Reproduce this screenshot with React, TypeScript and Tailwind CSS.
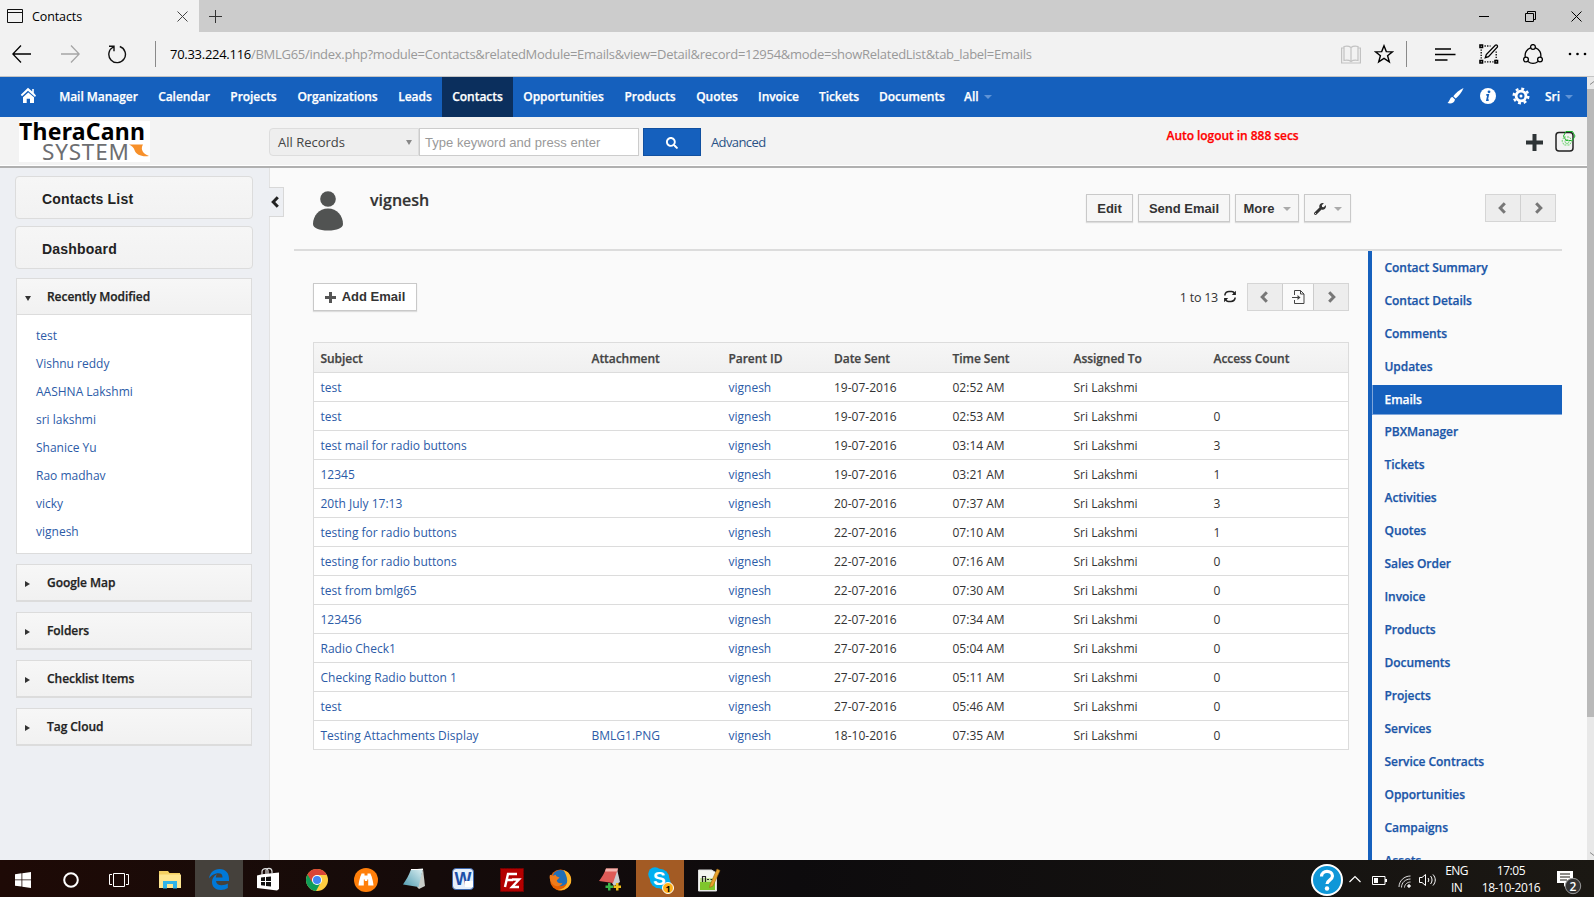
import React from "react";
import { FaWrench, FaSearch } from "react-icons/fa";

const STRONG = "font-semibold tracking-[-0.05px] [-webkit-text-stroke:0.25px_currentColor]";

const navItems: [string, string][] = [
  ["Mail Manager", "w-[99px]"],
  ["Calendar", "w-[72px]"],
  ["Projects", "w-[67px]"],
  ["Organizations", "w-[101px]"],
  ["Leads", "w-[54px]"],
  ["Contacts", "w-[71px]"],
  ["Opportunities", "w-[101px]"],
  ["Products", "w-[72px]"],
  ["Quotes", "w-[62px]"],
  ["Invoice", "w-[61px]"],
  ["Tickets", "w-[60px]"],
  ["Documents", "w-[86px]"],
];

const recent = ["test", "Vishnu reddy", "AASHNA Lakshmi", "sri lakshmi", "Shanice Yu", "Rao madhav", "vicky", "vignesh"];
const widgets = ["Google Map", "Folders", "Checklist Items", "Tag Cloud"];

const rows: [string, string, string, string, string][] = [
  ["test", "", "19-07-2016", "02:52 AM", ""],
  ["test", "", "19-07-2016", "02:53 AM", "0"],
  ["test mail for radio buttons", "", "19-07-2016", "03:14 AM", "3"],
  ["12345", "", "19-07-2016", "03:21 AM", "1"],
  ["20th July 17:13", "", "20-07-2016", "07:37 AM", "3"],
  ["testing for radio buttons", "", "22-07-2016", "07:10 AM", "1"],
  ["testing for radio buttons", "", "22-07-2016", "07:16 AM", "0"],
  ["test from bmlg65", "", "22-07-2016", "07:30 AM", "0"],
  ["123456", "", "22-07-2016", "07:34 AM", "0"],
  ["Radio Check1", "", "27-07-2016", "05:04 AM", "0"],
  ["Checking Radio button 1", "", "27-07-2016", "05:11 AM", "0"],
  ["test", "", "27-07-2016", "05:46 AM", "0"],
  ["Testing Attachments Display", "BMLG1.PNG", "18-10-2016", "07:35 AM", "0"],
];

const related = [
  "Contact Summary", "Contact Details", "Comments", "Updates", "Emails", "PBXManager", "Tickets", "Activities", "Quotes",
  "Sales Order", "Invoice", "Products", "Documents", "Projects", "Services", "Service Contracts", "Opportunities", "Campaigns", "Assets",
];

const GRID = "grid grid-cols-[271px_137px_105.5px_118.5px_121px_140px_1fr] pl-[6.5px] items-center";

function Caret({ className = "" }: { className?: string }) {
  return <span className={`inline-block border-x-4 border-t-4 border-x-transparent ${className}`} />;
}

function Chevron({ right = false }: { right?: boolean }) {
  return (
    <svg width="8" height="12" viewBox="0 0 8 12" fill="none" stroke="currentColor" strokeWidth="3">
      <path d={right ? "M1.200 1.200L5.800 6 1.200 10.800" : "M6.800 1.200L2.200 6l4.600 4.800"} />
    </svg>
  );
}

function TabStrip() {
  return (
    <div className="flex h-8 shrink-0 bg-[#cccccc]">
      <div className="flex w-[199px] items-center bg-[#f2f2f2] pl-[7px] pr-[11px]">
        <svg width="16" height="14" viewBox="0 0 16 14" fill="none" stroke="#111">
          <path d="M.5 .5h15v13H.5zM.5 3.5h15" />
        </svg>
        <span className="ml-[9px] pt-0.5 text-[12.5px] text-black tracking-[-0.1px]">Contacts</span>
        <svg className="ml-auto" width="11" height="11" viewBox="0 0 11 11" stroke="#444">
          <path d="M.5 .5l10 10M10.500 .5l-10 10" />
        </svg>
      </div>
      <svg className="ml-[10px] mt-[10px]" width="13" height="13" viewBox="0 0 13 13" stroke="#333">
        <path d="M6.500 0v13M0 6.500h13" />
      </svg>
      <div className="ml-auto flex items-center pr-[12px]">
        <svg width="10" height="10" viewBox="0 0 10 10" stroke="#000"><path d="M0 5.500h10" /></svg>
        <svg className="ml-9" width="11" height="11" viewBox="0 0 11 11" fill="none" stroke="#000">
          <path d="M.5 2.500h8v8h-8zM2.500 2.500v-2h8v8h-2" />
        </svg>
        <svg className="ml-[35px]" width="11" height="11" viewBox="0 0 11 11" stroke="#000"><path d="M.5 .5l10 10M10.500 .5l-10 10" /></svg>
      </div>
    </div>
  );
}

function AddressBar() {
  return (
    <div className="flex h-[45px] shrink-0 items-center border-b border-[#c4c4c4] bg-[#f2f2f2] pl-3">
      <svg width="20" height="18" viewBox="0 0 20 18" fill="none" stroke="#000" strokeWidth="1.3"><path d="M9 .5L.8 9l8.200 8.500M.8 9H19" /></svg>
      <svg className="ml-7" width="20" height="18" viewBox="0 0 20 18" fill="none" stroke="#a5a5a5" strokeWidth="1.300"><path d="M11 .5L19.200 9 11 17.500M19.200 9H1" /></svg>
      <svg className="ml-[27px]" width="20" height="19" viewBox="0 0 20 19" fill="none" stroke="#111" strokeWidth="1.400">
        <path d="M12.800 1.500a8.300 8.300 0 1 1-6.500.5M2 1.300h5v5" />
      </svg>
      <div className="ml-7 h-[26px] w-px bg-[#8a8a8a]" />
      <div className="ml-[14px] pt-[2px] text-[13px] tracking-[-0.28px] text-[#999] whitespace-nowrap"><span className="text-black">70.33.224.116</span>/BMLG65/index.php?module=Contacts&amp;relatedModule=Emails&amp;view=Detail&amp;record=12954&amp;mode=showRelatedList&amp;tab_label=Emails</div>
      <div className="ml-auto flex items-center pr-[7px]">
        <svg width="20" height="19" viewBox="0 0 20 19" fill="none" stroke="#c2c2c2" strokeWidth="1.200">
          <path d="M10 2.500C8 1 5 1 3 1.500v14c2-.4 5-.4 7 1 2-1.400 5-1.400 7-1v-14c-2-.5-5-.5-7 1zM10 2.500v14M3 3H.6v15h18.800V3H17" />
        </svg>
        <svg className="ml-[13px]" width="20" height="20" viewBox="0 0 20 20" fill="none" stroke="#000" strokeWidth="1.400">
          <path d="M10 1.800l2.300 5.800 6.200.3-4.900 3.900 1.700 6L10 14.400l-5.300 3.400 1.700-6L1.500 7.900l6.200-.3z" />
        </svg>
        <div className="ml-[12px] h-[26px] w-px bg-[#8a8a8a]" />
        <svg className="ml-7" width="21" height="13" viewBox="0 0 21 13" stroke="#000" strokeWidth="1.300"><path d="M0 1h16M0 6.500h20.500M0 12h12.500" /></svg>
        <svg className="ml-[23px]" width="20" height="20" viewBox="0 0 20 20" fill="none" stroke="#000" strokeWidth="1.300">
          <path d="M1 1h2.500v2.500H1zM1 16.500h2.500V19H1zM16 16.500h2.500V19H16z" strokeWidth="1.600" />
          <path d="M6.300 13.700l1-3.200L16.300 1.200c1.200-.8 2.700.5 2 2L9.500 12.600z" />
          <path d="M5.500 2h6M2.200 5.500v10M17.200 7.500v8M5.500 17.800h9" strokeDasharray="1.300 1.300" />
        </svg>
        <svg className="ml-6" width="20" height="20" viewBox="0 0 20 20" fill="none" stroke="#000" strokeWidth="1.300">
          <circle cx="10" cy="3" r="2.400" /><circle cx="3" cy="15.500" r="2.400" /><circle cx="17" cy="15.500" r="2.400" />
          <path d="M7.500 3.800A8 8 0 0 0 2.300 13M12.500 3.800a8 8 0 0 1 5.200 9.200M5 17.500a8 8 0 0 0 10 0" />
        </svg>
        <svg className="ml-[25px]" width="19" height="4" viewBox="0 0 19 4"><circle cx="2" cy="2" r="1.300" /><circle cx="9.500" cy="2" r="1.300" /><circle cx="17" cy="2" r="1.300" /></svg>
      </div>
    </div>
  );
}

function NavBar() {
  return (
    <nav className={`flex h-10 shrink-0 items-center bg-[#1560bd] text-[12px] text-white ${STRONG}`}>
      <div className="-mt-[4px] flex w-[49px] pl-5">
        <svg width="17" height="17" viewBox="0 0 17 17" fill="#fff">
          <path d="M8 .8L.8 7.800l1.200 1.500L8 3.800l3.300 3 1.500 1.300L15 10l1-1.500L13.800 6V2h-1.600v2.600z" />
          <path d="M8.300 5.600L3 10.300V16h3.700v-4.300h3.300V16h4v-5.700z" />
        </svg>
      </div>
      {navItems.map(([label, w]) => (
        <div key={label} className={`${w} flex h-10 items-center justify-center whitespace-nowrap ${label === "Contacts" ? "bg-[#0b2f5d]" : ""}`}>{label}</div>
      ))}
      <div className="ml-[9px] flex items-center">All<Caret className="ml-[6px] border-t-[#5f93d6]" /></div>
      <div className="ml-auto flex items-center pr-[14px]">
        <svg className="-mt-0.5" width="17" height="16" viewBox="0 0 17 16" fill="#fff">
          <path d="M16.500 0C12 2 8.500 5 6.300 8.300l2.400 2.200C12 7.500 15 4 16.500 0z" /><path d="M5.500 9c-2.500 0-2 3-5 6 3 1 7 .3 7.500-3.500z" />
        </svg>
        <svg className="ml-4 -mt-0.5" width="16" height="16" viewBox="0 0 16 16">
          <circle cx="8" cy="8" r="8" fill="#fff" /><circle cx="9" cy="3.800" r="1.400" fill="#1560bd" />
          <path d="M6.300 6.800h1.900l-1.200 5.400h1.700" fill="none" stroke="#1560bd" strokeWidth="1.700" />
        </svg>
        <svg className="ml-[16px] -mt-0.5" width="18" height="18" viewBox="0 0 18 18" fill="none" stroke="#fff">
          <circle cx="9" cy="9" r="4.900" strokeWidth="2.800" /><circle cx="9" cy="9" r="1.500" fill="#fff" stroke="none" />
          <circle cx="9" cy="9" r="7.300" strokeWidth="2.400" strokeDasharray="2.870 2.870" />
        </svg>
        <span className="ml-[15px]">Sri</span>
        <Caret className="ml-[5px] border-t-[#5f93d6]" />
      </div>
    </nav>
  );
}

function SearchHeader() {
  return (
    <header className="flex h-[51px] shrink-0 border-b-2 border-b-[#b0b0b0] bg-[#f3f3f3] text-[13px] shadow-[inset_0_-1px_0_#fff]">
      <div className="ml-[19px] mt-1 flex h-[41px] w-[131px] flex-col bg-white">
        <div className="h-[21px] whitespace-nowrap font-['Noto_Sans'] text-[23px] font-bold leading-[20px] tracking-[0.25px] text-black">TheraCann</div>
        <div className="flex">
          <span className="ml-[23px] w-[87px] whitespace-nowrap font-['Noto_Sans'] text-[22.500px] leading-[22px] tracking-[0.8px] text-[#6d6e71]">SYSTEM</span>
          <svg className="mt-[3px]" width="20" height="13" viewBox="0 0 20 13" fill="#f7902a"><path d="M0 .5h14c-3 4.500 0 9.500 6 11.500-7 1-13-1-14.500-6C4.800 3.500 2.500 1.500 0 .5z" /></svg>
        </div>
      </div>
      <div className="ml-[119px] mt-[11px] flex h-7 w-[150px] items-center rounded-l-sm border border-[#ddd] bg-[#eeeeee] pl-2 pr-[6px] pt-px text-[#444]">
        All Records<Caret className="ml-auto border-x-[3.500px] border-t-[5px] border-t-[#888]" />
      </div>
      <div className="mt-[11px] flex h-7 w-[220px] items-center border border-[#ccc] bg-white pl-[5px] pt-0.5 font-['Liberation_Sans'] tracking-[0.04px] text-[#999]">Type keyword and press enter</div>
      <div className="ml-1 mt-[11px] flex h-7 w-[58px] items-center justify-center border border-[#1150a0] bg-[#1560bd] pt-0.5 text-white"><FaSearch size={12} /></div>
      <div className="ml-[10px] mt-[12px] flex h-7 items-center tracking-[-0.6px] text-[#2a5285]">Advanced</div>
      <div className={`ml-[401px] mt-[9px] text-[12px] leading-[20px] text-[#f00] whitespace-nowrap ${STRONG}`}>Auto logout in 888 secs</div>
      <div className="ml-auto flex pr-[11px]">
        <svg className="mt-[17px]" width="17" height="17" viewBox="0 0 17 17" fill="#2e3436"><path d="M6.500 0h4v6.500H17v4h-6.500V17h-4v-6.500H0v-4h6.500z" /></svg>
        <svg className="ml-3 mt-[13px]" width="21" height="23" viewBox="0 0 21 23" fill="none">
          <rect x="1" y="2.500" width="17" height="18.500" rx="3" fill="#f2f2f2" stroke="#222" strokeWidth="1.500" />
          <path d="M11 1.500h6.500l2.500 4.500-2.500 4.500H11L8.500 6z" stroke="#18b028" /><path d="M9 7h5.500l2.500 4-2.500 4H9l-2-4z" stroke="#6fd36f" strokeDasharray="2 1" /><circle cx="12" cy="11.500" r="2" stroke="#7fd67f" />
        </svg>
      </div>
    </header>
  );
}

function Sidebar() {
  return (
    <aside className="flex w-[270px] shrink-0 flex-col border-r border-[#e2e2e2] bg-[#edeff3] pl-[15px] pr-4 pt-2">
      {["Contacts List", "Dashboard"].map((t) => (
        <div key={t} className="mb-[7px] flex h-[43px] items-center rounded-sm border border-[#dcdcdc] bg-gradient-to-b from-[#f6f6f6] to-[#f2f2f2] pl-[26px] pt-[3px] font-['Liberation_Sans'] text-[14px] font-bold tracking-[0.2px] text-[#222]">{t}</div>
      ))}
      <div className="mx-px mt-[2px] h-[276px] border border-[#dcdcdc] bg-white">
        <div className="flex h-[36px] items-center border-b border-[#dcdcdc] bg-gradient-to-b from-[#f7f7f7] to-[#f1f1f1]">
          <Caret className="ml-2 mt-1 border-x-[3px] border-t-[5px] border-t-[#333]" />
          <span className={`ml-4 text-[12px] text-[#222] ${STRONG}`}>Recently Modified</span>
        </div>
        <div className="pl-[19px] pt-[7px] text-[12px] text-[#2c5ba7]">
          {recent.map((r) => <div key={r} className="h-7 leading-7">{r}</div>)}
        </div>
      </div>
      {widgets.map((w) => (
        <div key={w} className="mx-px mt-[10px] flex h-[38px] shrink-0 items-center border border-b-2 border-[#dcdcdc] bg-gradient-to-b from-[#f7f7f7] to-[#f1f1f1]">
          <span className="ml-2 mt-[3px] border-y-[3px] border-l-[5px] border-y-transparent border-l-[#333]" />
          <span className={`ml-[17px] text-[12px] text-[#222] ${STRONG}`}>{w}</span>
        </div>
      ))}
    </aside>
  );
}

const BTN = "flex h-7 items-center justify-center border border-[#c9c9c9] pt-px font-['Liberation_Sans'] text-[13px] font-bold text-[#333] shadow-[0_1px_1px_#ddd] whitespace-nowrap";

function RecordHeader() {
  return (
    <div className="flex h-[83px] shrink-0">
      <div className="-ml-px mt-[19px] flex h-[30px] w-[15px] items-center border border-l-0 border-[#d8d8d8] bg-[#edeff3] pl-[2px] text-[#222]"><Chevron /></div>
      <div className="ml-[10px] mr-[25px] flex flex-1 border-b-2 border-[#dcdcdc]">
        <svg className="ml-[19px] mt-[23px]" width="30" height="40" viewBox="0 0 30 40" fill="#515352">
          <circle cx="15" cy="8" r="7.800" /><path d="M15 17.500C6 17.500 0 25 0 33c0 4 6 6.500 15 6.500s15-2.500 15-6.500c0-8-6-15.500-15-15.500z" />
        </svg>
        <span className="ml-[27px] mt-5 text-[16px] font-semibold leading-6 text-[#333] [-webkit-text-stroke:0.2px_currentColor]">vignesh</span>
        <div className="ml-auto mt-[26px] flex">
          <div className={`${BTN} w-[47px] bg-[#f6f6f6]`}>Edit</div>
          <div className={`${BTN} ml-[5px] w-[92px] bg-[#f6f6f6]`}>Send Email</div>
          <div className={`${BTN} ml-[5px] w-[64px] bg-[#f6f6f6]`}>More<Caret className="ml-2 border-t-[#aaa]" /></div>
          <div className={`${BTN} ml-[5px] w-[47px] bg-[#f6f6f6]`}><FaWrench size={12} /><Caret className="ml-2 border-t-[#aaa]" /></div>
          <div className="ml-[134px] mr-[6px] flex h-7 w-[71px] border border-[#d5d5d5] bg-[#ededed] text-[#777]">
            <div className="flex flex-1 items-center justify-center border-r border-[#d0d0d0] pr-px"><Chevron /></div>
            <div className="flex flex-1 items-center justify-center pl-[2px]"><Chevron right /></div>
          </div>
        </div>
      </div>
    </div>
  );
}

function RelatedList() {
  return (
    <div className="w-[1036px]">
      <div className="flex h-7 mt-8 items-center">
        <div className={`${BTN} w-[104px] bg-white`}>
          <svg className="mr-[6px] -mt-px" width="11" height="11" viewBox="0 0 11 11" fill="#555"><path d="M4 0h3v4h4v3H7v4H4V7H0V4h4z" /></svg>
          <span className="-mt-px">Add Email</span>
        </div>
        <span className="ml-auto pt-0.5 text-[12.500px] tracking-[-0.25px] text-[#333]">1 to 13</span>
        <svg className="-mt-0.5 ml-[6px] mr-[11px]" width="12" height="13" viewBox="0 0 12 13" fill="none" stroke="#222" strokeWidth="1.500">
          <path d="M.9 5.500V5A4.200 4.200 0 0 1 5 1.600h2.500a3 3 0 0 1 3 2.500M11.100 7.500V8A4.200 4.200 0 0 1 7 11.400H4.500a3 3 0 0 1-3-2.500" /><path d="M11.900 .8v4.200H7.800zM.1 12.200V8H4.200z" fill="#222" stroke="none" />
        </svg>
        <div className="flex h-7 w-[102px] border border-[#d5d5d5] bg-[#ededed] text-[#777]">
          <div className="flex w-[34px] items-center justify-center pr-[2px]"><Chevron /></div>
          <div className="flex w-8 items-center justify-center border-x border-[#ccc] bg-[#fafafa]">
            <svg width="13" height="14" viewBox="0 0 13 14" fill="none" stroke="#444"><path d="M2.500 5V.500h6l3.500 3.500v9.500H2.500V10M8.500 .5V4H12M0 7.500h8" /><path d="M5.500 5l3 2.500-3 2.500z" fill="#444" stroke="none" /></svg>
          </div>
          <div className="flex flex-1 items-center justify-center pl-[2px]"><Chevron right /></div>
        </div>
      </div>
      <div className="mt-[31px] border border-b-0 border-[#dcdcdc] bg-white text-[12px] text-[#333]">
        <div className={`${GRID} h-[30px] border-b border-[#dcdcdc] bg-gradient-to-b from-[#f6f6f6] to-[#f0f0f0] pt-[3px] text-[#444] ${STRONG}`}>
          {["Subject", "Attachment", "Parent ID", "Date Sent", "Time Sent", "Assigned To", "Access Count"].map((h) => <span key={h}>{h}</span>)}
        </div>
        {rows.map((r, i) => (
          <div key={i} className={`${GRID} h-[29px] border-b border-[#dcdcdc] pt-0.5`}>
            <span className="text-[#2c5ba7]">{r[0]}</span>
            <span className="text-[#2c5ba7]">{r[1]}</span>
            <span className="text-[#2c5ba7]">vignesh</span>
            <span>{r[2]}</span>
            <span>{r[3]}</span>
            <span>Sri Lakshmi</span>
            <span>{r[4]}</span>
          </div>
        ))}
      </div>
    </div>
  );
}

function RelatedTabs() {
  return (
    <div className={`ml-[19px] w-[194px] overflow-hidden border-l-4 border-[#1560bd] text-[12px] text-[#1a56a8] ${STRONG}`}>
      {related.map((t) =>
        t === "Emails" ? (
          <div key={t} className="mt-0.5 flex h-[30px] items-center border-b border-l border-[#7fa6da] bg-[#1560bd] pl-[11.5px] text-white">{t}</div>
        ) : (
          <div key={t} className="flex h-[33px] items-center pl-[12.5px]">{t}</div>
        )
      )}
    </div>
  );
}

function Taskbar() {
  const cell = "flex h-[37px] items-center justify-center shrink-0";
  return (
    <footer className="flex h-[37px] shrink-0 bg-gradient-to-r from-[#1e0a06] via-[#0d0b0d] to-[#1b1813] text-white">
      <div className={`${cell} w-[46px] pt-0.5`}><svg width="16" height="16" viewBox="0 0 16 16" fill="#fff"><path d="M0 2.200l6.500-.9v6.200H0zM7.300 1.200L16 0v7.500H7.300zM0 8.300h6.500v6.300L0 13.700zM7.300 8.300H16V16l-8.700-1.200z" /></svg></div>
      <div className={`${cell} w-[50px] pt-0.5`}><svg width="16" height="16" viewBox="0 0 16 16"><circle cx="8" cy="8" r="6.800" fill="none" stroke="#fff" strokeWidth="2" /></svg></div>
      <div className={`${cell} w-[45px] pt-0.5`}><svg width="20" height="14" viewBox="0 0 20 14" fill="none" stroke="#fff"><path d="M4.500.500h11v13h-11zM3 1.500H.5v10H3M17 1.500h2.500v10H17" /></svg></div>
      <div className={`${cell} w-[54px] pl-[4px] pt-0.5`}>
        <svg width="22" height="19" viewBox="0 0 22 19"><path d="M0 1h9l1.500 2H21v15H0z" fill="#f3cf62" /><path d="M0 4.500h22V18H0z" fill="#fde590" /><path d="M4 11h14v7.500h-4V14H8v4.500H4z" fill="#2fb4ea" /></svg>
      </div>
      <div className={`${cell} w-12 bg-[#45413c] pt-0.5`}>
        <svg width="20" height="21" viewBox="0 0 20 21" fill="#0078d7"><path d="M0 9.500C1 3.500 5 0 10.500 0 17 0 20 4.500 20 9.500v2.500H7c.3 3 2.600 4.300 5.500 4.300 2.500 0 4.700-.7 6.300-1.700v4.500C17 20.300 14.500 21 11.800 21 6.500 21 3 17.800 3 13c0-3.500 1.800-6.300 5-7.800-.8 1-1.100 2-1.200 3.200h6.700c0-2.600-1-4.200-4-4.200C5.500 4.200 2 6.500 0 9.500z" /></svg>
      </div>
      <div className={`${cell} w-[49px]`}>
        <svg width="22" height="24" viewBox="0 0 22 24"><path d="M0 8.500l5-1.200L22 5.500v16.500l-2 1.500L0 21z" fill="#fff" /><path d="M5 8V4.500C5 1.500 11 0 11 4v3M9 7V3.500c0-3 6-3 6 1V7" fill="none" stroke="#ddd" strokeWidth="1.200" /><path d="M4 10.500l4-.4V14H4zM9 10l5-.5V14H9zM4 15h4v3.700L4 18.200zM9 15h5v4.500l-5-.6z" fill="#111" /></svg>
      </div>
      <div className={`${cell} w-[49px] pt-0.5`}>
        <svg width="22" height="22" viewBox="0 0 22 22"><circle cx="11" cy="11" r="11" fill="#ffcd40" /><path d="M1.500 5.500A11 11 0 0 0 10 22l5-9-4-2z" fill="#0f9d58" /><path d="M1.500 5.500L6 13l5-7h9.700A11 11 0 0 0 1.500 5.500z" fill="#db4437" /><circle cx="11" cy="11" r="5" fill="#fff" /><circle cx="11" cy="11" r="4" fill="#4285f4" /></svg>
      </div>
      <div className={`${cell} w-[49px] pt-0.5`}>
        <svg width="24" height="24" viewBox="0 0 24 24"><circle cx="12" cy="12" r="12" fill="#ff7f0a" /><path d="M7.500 5.500h3v2h3v-2h3c.3 1.200.5 1.700 1 2.500.8 3 1.800 6 2 9.500h-5.300v-6h-1v1.500h-2.400v-1.500h-1v6H4.500c.2-3.500 1.200-6.500 2-9.500.5-.8.7-1.300 1-2.500z" fill="#fff" /></svg>
      </div>
      <div className={`${cell} w-12`}>
        <svg width="23" height="23" viewBox="0 0 23 23"><defs><linearGradient id="pad" x1="1" y1="0" x2="0" y2="1"><stop offset="0" stopColor="#e0f1f3" /><stop offset="1" stopColor="#4d9bb0" /></linearGradient></defs><path d="M20 2l2 17-6 3-2-2z" fill="#c9cdc9" /><path d="M8 2.500L20 1.500 15.500 20 0 17.500C3 13 6 8 8 2.500z" fill="url(#pad)" /><path d="M8 2.500h12" stroke="#fff" /></svg>
      </div>
      <div className={`${cell} w-[49px]`}>
        <div className="relative flex h-[22px] w-[22px] items-center justify-center rounded-sm border border-[#3c66ac] bg-[#e6effb] font-['Liberation_Sans'] text-[18px] font-bold leading-[20px] tracking-[-1px] text-[#1d4fa8]">W<span className="absolute bottom-[2px] right-0 h-[6px] w-[8px] bg-white" /></div>
      </div>
      <div className={`${cell} w-[49px] pt-0.5`}>
        <svg width="24" height="24" viewBox="0 0 24 24"><path d="M.5.500h23v23H.5z" fill="#b30000" stroke="#7a0000" strokeDasharray="2 1" /><path d="M5 19L8 6h9M7 12h6M12 11.500h7l-7 7.500h7" fill="none" stroke="#fff" strokeWidth="2.400" /></svg>
      </div>
      <div className={`${cell} w-[49px] pt-0.5`}>
        <svg width="23" height="22" viewBox="0 0 24 23"><circle cx="12" cy="11.500" r="11" fill="#e66000" /><circle cx="12" cy="9.500" r="8.500" fill="#1f6fb8" /><path d="M15 1c7 2 9 8 8 13-2 6-8 9-14 8 7-1 10-5 10-10 0-4-2-8-4-11z" fill="#fdb62b" /><path d="M1 6l3 1 3-1c0 2 2 2 4 3l-3 3c1 3 4 3 6 3-2 4-8 4-11 0C1 12 0 9 1 6z" fill="#ef7b1a" /></svg>
      </div>
      <div className={`${cell} w-[50px]`}>
        <svg width="23" height="24" viewBox="0 0 23 24"><path d="M18 2l3 13-6 4-2-3z" fill="#c9cccf" /><path d="M7 1.500h12L14 16 0 14C3 10 5.500 6 7 1.500z" fill="#dd5b57" /><path d="M7 1.500h12l-1 3L6 4.500z" fill="#f3b4ae" /><path d="M9 16h2.500v2.500H14V21h-2.500v2.500H9V21H6.500v-2.500H9z" fill="#39b54a" /><path d="M17 16h2.500v2.500H22V21h-2.500v2.500H17V21h-2.500v-2.500H17z" fill="#f0c01c" /></svg>
      </div>
      <div className={`${cell} relative ml-px w-12 bg-[#a35b24]`}>
        <svg className="-ml-0.5" width="23" height="23" viewBox="0 0 23 23"><circle cx="7" cy="7" r="6.800" fill="#00aff0" /><circle cx="16" cy="16" r="6.800" fill="#00aff0" /><circle cx="11.500" cy="11.500" r="9.800" fill="#00aff0" /></svg>
        <span className="absolute left-[17px] top-[8px] font-['Liberation_Sans'] text-[19px] font-bold leading-[22px]">S</span>
        <span className="absolute left-[26px] top-[22px] flex h-3 w-3 items-center justify-center rounded-full border border-white bg-[#ffb11c] text-[9px] font-bold leading-none text-black">1</span>
      </div>
      <div className={`${cell} w-[50px] pt-0.5`}>
        <svg width="24" height="24" viewBox="0 0 24 24"><path d="M1.500 2h13l5 3v18h-18z" fill="#f4f6ef" stroke="#ddd" /><path d="M3 14h15v8H3z" fill="#7fc62c" /><path d="M3 10h15v4H3z" fill="#c7e79b" /><path d="M5.500 14V8.500h3V14M10 11.500h2M13.500 11.500h2" fill="none" stroke="#222" strokeWidth="1.200" /><path d="M13 17L20 1l3 1.500-7 15.500-3.500 1.500z" fill="#e7a12b" stroke="#9c6a14" strokeWidth=".6" /></svg>
      </div>
      <div className="ml-auto flex items-center pr-[12px]">
        <svg className="mt-[3px]" width="32" height="32" viewBox="0 0 32 32"><circle cx="16" cy="16" r="15" fill="#0f97d8" stroke="#fff" strokeWidth="2" /><path d="M10.500 12.500C10.500 5.500 21.500 6 21.500 12c0 4-5.500 4.200-5.500 8" fill="none" stroke="#fff" strokeWidth="3.200" /><circle cx="16" cy="24.500" r="2.200" fill="#fff" /></svg>
        <svg className="ml-[6px]" width="12" height="8" viewBox="0 0 12 8" fill="none" stroke="#fff" strokeWidth="1.200"><path d="M.5 7L6 1.500 11.500 7" /></svg>
        <svg className="ml-[11px] mt-[3px]" width="15" height="9" viewBox="0 0 15 9"><path d="M.5.500h12.500v8H.5z" fill="none" stroke="#fff" /><path d="M2 2h4v5H2zM13 3h2v3h-2z" fill="#fff" /></svg>
        <svg className="ml-[11px] mt-[5px]" width="13" height="13" viewBox="0 0 13 13" fill="none" stroke="#ddd"><path d="M1 12C1 6 6 1 12.500 1M3.500 12.500c0-5 4-8.500 9-8.500M6.500 12.500c0-3 3-5.500 6-5.500" /><circle cx="11" cy="11" r="1.300" fill="#fff" /></svg>
        <svg className="ml-[8px] mt-[3px]" width="17" height="14" viewBox="0 0 17 14" fill="none" stroke="#fff"><path d="M.5 4.500h2.500l3.500-3v11L3 9.500H.5zM9 5c1 1.200 1 2.800 0 4M11.500 3c2 2.500 2 5.500 0 8M14 1.500c3 3.500 3 7.500 0 11" /></svg>
        <div className="ml-[8px] mt-px w-[25px] text-center text-[12px] leading-[17px] tracking-[-0.6px]">ENG<br />IN</div>
        <div className="ml-[12px] w-[60px] text-center text-[12px] leading-[17px] tracking-[-0.4px] whitespace-nowrap">17:05<br />18-10-2016</div>
        <svg className="ml-4 mt-[8px]" width="25" height="26" viewBox="0 0 25 26"><path d="M0 1h16v12h-6l-3 4v-4H0z" fill="#fff" /><path d="M3 4h10M3 7h10M3 10h7" stroke="#1b1813" /><circle cx="16" cy="16" r="7.700" fill="#333" stroke="#999" /><text x="16" y="20.500" textAnchor="middle" fontSize="12" fontWeight="600" fill="#fff">2</text></svg>
      </div>
    </footer>
  );
}

export default function App() {
  return (
    <div className="flex h-[897px] w-[1594px] flex-col overflow-hidden font-['Open_Sans',sans-serif]">
      <TabStrip />
      <AddressBar />
      <div className="flex min-h-0 flex-1">
        <div className="flex min-w-0 flex-1 flex-col">
          <NavBar />
          <SearchHeader />
          <div className="flex min-h-0 flex-1">
            <Sidebar />
            <main className="flex min-w-0 flex-1 flex-col bg-[#fafafa]">
              <RecordHeader />
              <div className="flex min-h-0 flex-1 pl-[43px]">
                <RelatedList />
                <RelatedTabs />
              </div>
            </main>
          </div>
        </div>
        <div className="flex w-[7px] shrink-0 flex-col bg-[#e8e8e8]">
          <svg width="7" height="12" viewBox="0 0 7 12" fill="none" stroke="#888"><path d="M3 7.500l4-3" /></svg>
          <div className="h-[628px] bg-[#b9b9b9]" />
          <svg className="mt-auto" width="7" height="12" viewBox="0 0 7 12" fill="none" stroke="#888"><path d="M3 4.500l4 3" /></svg>
        </div>
      </div>
      <Taskbar />
    </div>
  );
}
